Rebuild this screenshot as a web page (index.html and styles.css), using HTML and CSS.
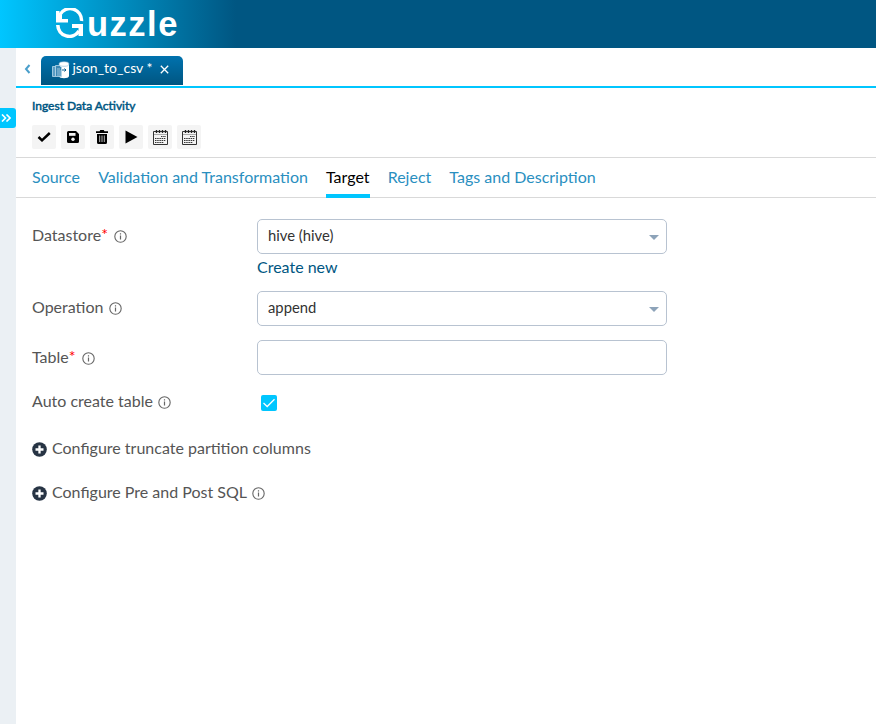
FILE: index.html
```html
<!DOCTYPE html>
<html lang="en">
<head>
<meta charset="utf-8">
<title>Guzzle</title>
<link rel="stylesheet" href="styles.css">
</head>
<body>
<svg class="defs" width="0" height="0">
  <symbol id="info" viewBox="0 0 13 13"><circle cx="6.5" cy="6.5" r="5.7" fill="none" stroke="currentColor" stroke-width="1.1"/><path d="M6.5 5.6v4M6.5 3.2v1.3" stroke="currentColor" stroke-width="1.2"/></symbol>
  <symbol id="plus" viewBox="0 0 15 15"><circle cx="7.5" cy="7.5" r="7.3" fill="#273444"/><path d="M7.5 3.5v8M3.5 7.5h8" stroke="#fff" stroke-width="2.3"/></symbol>
  <symbol id="calendar" viewBox="0 0 16 16"><path d="M1.500 2.500h14v13h-14z" fill="none" stroke="#333"/><path d="M2 5.500h13" stroke="#aaa"/><path d="M4.500 1v3M7.500 1v3M10.500 1v3M13.500 1v3" stroke="#222" stroke-width="1.400"/><path d="M9 7.500h5M3 9.500h11M3 11.500h11M3 13.500h9" stroke="#333" stroke-width="1.200" stroke-dasharray="1.500 .7"/></symbol>
</svg>
<header class="header">
  <div class="logo">
    <svg width="30" height="30" viewBox="0 0 30 30"><path d="M5 6.500A11.500 11.500 0 0 1 26.500 13" fill="none" stroke="#fff" stroke-width="3.400"/><path d="M1 3h3.500v2.500l2.500 1.500v4h6v3.500H1z" fill="#fff"/><path d="M2.800 17A11.500 11.500 0 0 0 24 23" fill="none" stroke="#fff" stroke-width="3.600"/><path d="M17 16H28v12h-4.500v-8H17z" fill="#fff"/></svg>
    <span class="wordmark">uzzle</span>
  </div>
</header>
<div class="shell">
  <aside class="rail"><button class="expand"><svg width="10" height="8" viewBox="0 0 10 8"><path d="M1 .5L4.500 4 1 7.500M5.500 .5L9 4 5.500 7.500" fill="none" stroke="#fff" stroke-width="1.600"/></svg></button></aside>
  <main class="main">
    <div class="filetabs">
      <svg class="back" width="7" height="10" viewBox="0 0 7 10"><path d="M5.500 1L2 5l3.500 4" fill="none" stroke="#4a9fcb" stroke-width="2"/></svg>
      <div class="filetab">
        <svg width="18" height="18" viewBox="0 0 18 18"><path d="M7 3v12c0 3 10 3 10 0V3z" fill="#fff"/><ellipse cx="12" cy="3" rx="5" ry="2.300" fill="#fff" stroke="#8ab6d2" stroke-width=".6"/><path d="M.5 5.500h3v10h-3z" fill="#5b9dc4" stroke="#b9d9eb" stroke-width=".8"/><path d="M3.500 4.500h4l2 2v9h-6z" fill="#3d87b3" stroke="#b9d9eb" stroke-width=".8"/><path d="M5 8h3M5 10h4M5 12h4M5 14h4" stroke="#b9d9eb" stroke-width=".8"/><path d="M10 9h4M12.500 7.500L14 9l-1.500 1.500" fill="none" stroke="#075b8c"/></svg>
        <span class="filename">json_to_csv *</span>
        <svg class="close" width="9" height="9" viewBox="0 0 9 9"><path d="M.8 .8l7.400 7.400M8.200 .8L.8 8.200" stroke="#fff" stroke-width="1.300"/></svg>
      </div>
    </div>
    <div class="heading">Ingest Data Activity</div>
    <div class="toolbar">
      <button><svg width="14" height="10" viewBox="0 0 14 10"><path d="M1.500 5l3.500 3.300L12.800 1" fill="none" stroke="#000" stroke-width="2.500"/></svg></button>
      <button><svg width="12" height="12" viewBox="0 0 12 12"><path d="M1.500 0H9l3 3v7.500a1.500 1.500 0 0 1-1.500 1.500h-9A1.500 1.500 0 0 1 0 10.500v-9A1.500 1.500 0 0 1 1.500 0z"/><path d="M2 2h6.500v2.800H2z" fill="#f4f4f4"/><circle cx="6" cy="8.300" r="1.700" fill="#f4f4f4"/></svg></button>
      <button><svg width="12" height="14" viewBox="0 0 12 14"><path d="M0 1.200h3.500L4.300 0h3.400l.8 1.200H12V3H0zM1 4h10v8.500q0 1.500-1.500 1.500h-7Q1 14 1 12.500z"/><path d="M3.700 5.500v6.500M6 5.500v6.500M8.300 5.500v6.500" stroke="#ccc" stroke-width=".9"/></svg></button>
      <button><svg width="13" height="14" viewBox="0 0 13 14"><path d="M.5 .5L12.500 7 .5 13.500z"/></svg></button>
      <button><svg width="16" height="16"><use href="#calendar"/></svg></button>
      <button><svg width="16" height="16"><use href="#calendar"/></svg></button>
    </div>
    <nav class="tabs"><a>Source</a><a>Validation and Transformation</a><a class="active">Target</a><a>Reject</a><a>Tags and Description</a></nav>
    <div class="form">
      <div class="row datastore"><label>Datastore<span class="req">*</span><svg class="info"><use href="#info"/></svg></label>
        <div><div class="field">hive (hive)<i class="caret"></i></div><a class="create">Create new</a></div></div>
      <div class="row operation"><label>Operation<svg class="info"><use href="#info"/></svg></label><div class="field">append<i class="caret"></i></div></div>
      <div class="row table"><label>Table<span class="req">*</span><svg class="info"><use href="#info"/></svg></label><div class="field"></div></div>
      <div class="row auto"><label>Auto create table<svg class="info"><use href="#info"/></svg></label><span class="check"><svg width="16" height="16" viewBox="0 0 16 16"><path d="M2.500 8l3.700 3.500L13.500 4.300" fill="none" stroke="#fff" stroke-width="1.300"/></svg></span></div>
      <div class="config"><svg class="plus"><use href="#plus"/></svg><span>Configure truncate partition columns</span></div>
      <div class="config"><svg class="plus"><use href="#plus"/></svg><span>Configure Pre and Post SQL</span><svg class="info"><use href="#info"/></svg></div>
    </div>
  </main>
</div>
</body>
</html>
```
FILE: styles.css
```css
* { box-sizing: border-box; }
body { margin: 0; height: 724px; overflow: hidden; background: #fff; font: 16px/20px Lato, sans-serif; color: #555; }
.defs { position: absolute; }
svg { display: block; flex: none; }
button { border: 0; padding: 0; display: flex; align-items: center; justify-content: center; }
.header { height: 48px; padding: 8px 0 0 55px; background: linear-gradient(90deg, #00c6ff 0, #005682 236px); }
.logo { display: flex; height: 32px; }
.wordmark { margin-left: 2px; font: bold 34.500px/32px "Liberation Sans", sans-serif; letter-spacing: 1.500px; color: #fff; }
.shell { display: flex; height: 676px; }
.rail { width: 16px; background: #ebf0f4; padding-top: 60px; }
.expand { width: 16px; height: 20px; background: #00c6ff; border-radius: 0 3px 3px 0; padding-right: 5px; }
.main { flex: 1; min-width: 0; }
.filetabs { height: 40px; border-bottom: 2px solid #00c6ff; display: flex; padding: 8px 0 0 8px; }
.back { margin: 8px 10px 0 0; }
.filetab { width: 142px; height: 29px; border-radius: 5px 5px 0 0; background: linear-gradient(#0072ae, #005682); display: flex; padding: 5px 0 0 11px; color: #fff; font-size: 14px; }
.filename { line-height: 14px; margin-left: 2.500px; width: 81px; white-space: nowrap; }
.close { margin: 4px 0 0 6px; }
.heading { margin: 9px 0 0 16px; height: 17px; font-size: 12px; line-height: 17px; color: #005682; -webkit-text-stroke: .5px #005682; }
.toolbar { display: flex; gap: 5px; padding: 11px 16px 8px; height: 43px; }
.toolbar button { width: 24px; height: 24px; background: #f4f4f4; border-radius: 2px; }
.tabs { height: 41px; border: solid #d9d9d9; border-width: 1px 0; display: flex; gap: 18.100px; padding-left: 16px; color: #2a8fbf; }
.tabs a { height: 40px; line-height: 38px; white-space: nowrap; }
.tabs .active { color: #000; border-bottom: 4px solid #00c6ff; }
.form { padding: 21px 16px 0; }
.row { display: flex; }
.row label { width: 225px; display: flex; height: 34px; line-height: 32px; }
.info { width: 13px; height: 13px; margin: 11px 0 0 6px; color: #666; }
.req { color: red; line-height: 30px; }
.field { width: 410px; height: 35px; border: 1px solid #b8c3d1; border-radius: 5px; padding: 0 10px; font-size: 14.800px; line-height: 31px; color: #333; display: flex; justify-content: space-between; }
.caret { margin: 15px -3px 0 0; width: 10px; height: 5px; background: #8da3b9; clip-path: polygon(0 0, 100% 0, 50% 100%); }
.create { display: block; line-height: 25px; color: #005682; }
.datastore { height: 72px; }
.operation { height: 49px; }
.table { height: 44px; }
.row.table label, .row.auto label { line-height: 34px; }
.table .req { line-height: 32px; }
.table .info { margin-top: 12px; }
.check { width: 16px; height: 16px; margin: 11px 0 0 4px; background: #00c6ff; border-radius: 2px; }
.config { display: flex; height: 44px; line-height: 18px; }
.auto { height: 55px; }
.auto .info { margin: 12px 0 0 5px; }
.plus { width: 15px; height: 15px; margin: 3px 5px 0 0; }
.config .info { margin: 4px 0 0 5px; }
```
